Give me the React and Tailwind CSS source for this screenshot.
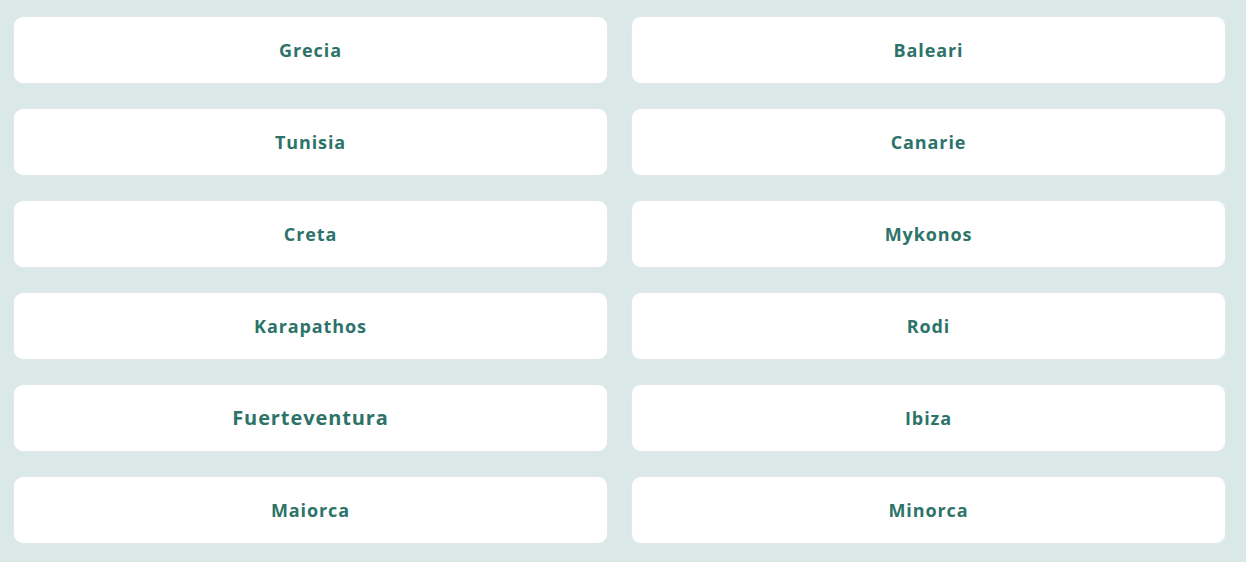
import React from 'react';

const places = [
  'Grecia', 'Baleari',
  'Tunisia', 'Canarie',
  'Creta', 'Mykonos',
  'Karapathos', 'Rodi',
  'Fuerteventura', 'Ibiza',
  'Maiorca', 'Minorca',
];

const App = () => {
  return (
    <div className="min-h-screen bg-[#dae8e8] pt-4 pb-[18px] pl-[13px] pr-[20px] font-['Open_Sans',sans-serif]">
      <div className="grid grid-cols-2 gap-x-[23px] gap-y-6">
        {places.map((name) => (
          <a
            key={name}
            href="#"
            className="flex h-[68px] items-center justify-center rounded-[10px] border border-[#e1e9e9] bg-white"
          >
            <span
              className={
                name === 'Fuerteventura'
                  ? 'text-[20px] font-bold tracking-[0.9px] text-[#2d7369]'
                  : 'text-[18px] font-bold tracking-[0.9px] text-[#2d7369]'
              }
            >
              {name}
            </span>
          </a>
        ))}
      </div>
    </div>
  );
};

export default App;
